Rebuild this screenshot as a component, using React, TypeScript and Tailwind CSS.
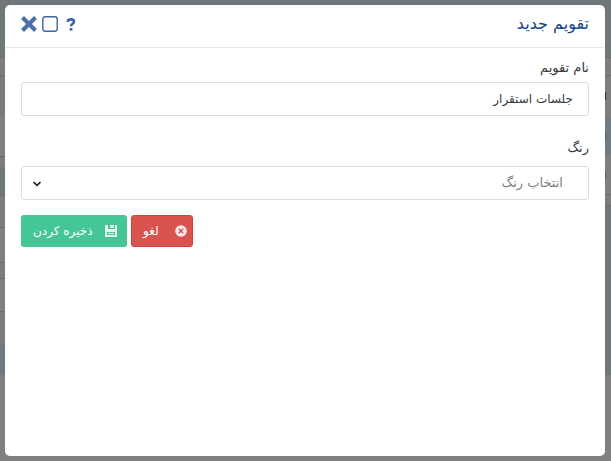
import React, { useState } from "react";

const leftStrips = [
  "h-[57px] bg-[#70777b]",
  "h-[19px] border-y border-[#6c6c6c] bg-[#7d7d7d]",
  "h-[41px] bg-[#7a7a7a]",
  "h-[39px] bg-[#808080]",
  "h-[11px] border-t border-[#626669] bg-[#7d7d7d]",
  "h-[28px] bg-[#70777b]",
  "h-[33px] border-y border-[#6c6c6c] bg-[#7d7d7d]",
  "h-[34px] bg-[#808080]",
  "h-[17px] border-y border-[#6c6c6c] bg-[#7d7d7d]",
  "h-[33px] border-b border-[#6c6c6c] bg-[#808080]",
  "h-[33px] bg-[#7d7d7d]",
  "h-[30px] bg-[#70797e]",
];

const rightStrips = [
  "h-[57px] bg-[#70777b]",
  "h-[19px] border-y border-[#6c6c6c] bg-[#7d7d7d]",
  "h-[42px] bg-[#7d7f7f]",
  "h-[37px] bg-[#6f7b83]",
  "h-[39px] bg-[#7f7f7f]",
  "h-[12px] border-y border-[#6c6c6c] bg-[#7d7d7d]",
  "h-[169px] bg-[#70777a]",
];

function Backdrop() {
  return (
    <div dir="ltr" className="absolute inset-0 flex bg-[#808080]" aria-hidden="true">
      <div className="w-1/2">
        {leftStrips.map((s, i) => (
          <div key={i} className={s} />
        ))}
      </div>
      <div className="w-1/2">
        {rightStrips.map((s, i) => (
          <div key={i} className={s} />
        ))}
      </div>
      <div className="absolute right-[5px] top-[92px] h-2 w-px bg-[#333]" />
      <div className="absolute right-[5px] top-[134px] h-[6px] w-px bg-[#555f66]" />
      <div className="absolute right-[5px] top-[172px] h-[6px] w-px bg-[#5c5c5c]" />
    </div>
  );
}

function CloseIcon() {
  return (
    <svg viewBox="0 0 16 16" className="size-4" fill="none" stroke="#4a70ae" strokeWidth="4.2">
      <path d="M1.5 1.5 14.5 14.5M14.5 1.5 1.5 14.5" />
    </svg>
  );
}

function MaximizeIcon() {
  return (
    <svg viewBox="0 0 16 16" className="size-4" fill="none" stroke="#3a66a8" strokeWidth="1.4">
      <rect x="0.8" y="0.8" width="14.4" height="14.4" rx="2.4" />
    </svg>
  );
}

function HelpIcon() {
  return (
    <svg viewBox="0 0 10 14" className="h-[13px] w-[10px]" fill="none" stroke="#3c64ab" strokeWidth="2.8">
      <path d="M1.4 4.2C1.6 2.2 3 1.5 4.9 1.5c2 0 3.3 1 3.3 2.5 0 2.3-3.2 2.2-3.2 5" />
      <path d="M3.5 12.2h3" />
    </svg>
  );
}

function SaveIcon() {
  return (
    <svg viewBox="0 0 12 12" className="size-3">
      <path
        fill="#e4f7ef"
        fillRule="evenodd"
        d="M0 0h3v4h7V0h2v12H0zM2 7v3h8V7z"
      />
      <path fill="#e4f7ef" d="M5 0h4v3H5zM3 8h6v1H3z" />
    </svg>
  );
}

function CancelIcon() {
  return (
    <svg viewBox="0 0 12 12" className="size-3" fill="none">
      <circle cx="6" cy="6" r="5.8" fill="#fbeaea" />
      <path d="M3.8 3.8 8.2 8.2M8.2 3.8 3.8 8.2" stroke="#d9534f" strokeWidth="1.5" />
    </svg>
  );
}

export default function App() {
  const [name, setName] = useState("جلسات استقرار");
  return (
    <div
      dir="rtl"
      lang="fa"
      className="relative flex min-h-screen py-[5px] pl-[5px] pr-[6px] font-['DejaVu_Sans',sans-serif] text-xs text-[#373a3c]"
    >
      <Backdrop />
      <section
        role="dialog"
        aria-labelledby="dialog-title"
        className="relative flex-1 rounded-[5px] bg-white"
      >
        <header className="mx-px flex h-[43px] items-center justify-between border-b border-[#e5e5e5] px-[15px] pb-1">
          <h1 id="dialog-title" className="text-base leading-6 text-[#12448c]">
            تقویم جدید
          </h1>
          <div className="flex items-center gap-[5px]">
            <button type="button" aria-label="راهنما" className="flex w-4 justify-center">
              <HelpIcon />
            </button>
            <button type="button" aria-label="بزرگ‌نمایی">
              <MaximizeIcon />
            </button>
            <button type="button" aria-label="بستن">
              <CloseIcon />
            </button>
          </div>
        </header>
        <form className="px-4 pt-2" onSubmit={(e) => e.preventDefault()}>
          <label htmlFor="name" className="block h-[26px] text-[13px] leading-6">
            نام تقویم
          </label>
          <input
            id="name"
            value={name}
            onChange={(e) => setName(e.target.value)}
            className="block h-[34px] w-full rounded-[3px] border border-[#dcdcdc] bg-white px-[15px] outline-none"
          />
          <label htmlFor="color" className="mt-5 block h-[30px] text-[13px] leading-6">
            رنگ
          </label>
          <div className="relative">
            <select
              id="color"
              className="block h-[34px] w-full appearance-none rounded-[3px] border border-[#dcdcdc] bg-white px-[25px] text-[13px] text-[#7d7d85] outline-none"
            >
              <option>انتخاب رنگ</option>
            </select>
            <svg
              viewBox="0 0 8 6"
              className="pointer-events-none absolute left-3 top-[15px] h-[6px] w-2"
              fill="none"
              stroke="#222"
              strokeWidth="1.6"
            >
              <path d="M0.5 1 4 4.4 7.5 1" />
            </svg>
          </div>
          <div className="mt-[15px] flex justify-end gap-1 text-white">
            <button
              type="button"
              className="flex h-8 w-[62px] items-center justify-between rounded-[3px] border border-[#d43f3a] bg-[#d9534f] pl-[11px] pr-[5px]"
            >
              <CancelIcon />
              <span>لغو</span>
            </button>
            <button
              type="submit"
              className="flex h-8 w-[106px] items-center justify-between rounded-[3px] bg-[#45c696] pl-3 pr-[10px]"
            >
              <SaveIcon />
              <span>ذخیره کردن</span>
            </button>
          </div>
        </form>
      </section>
    </div>
  );
}
